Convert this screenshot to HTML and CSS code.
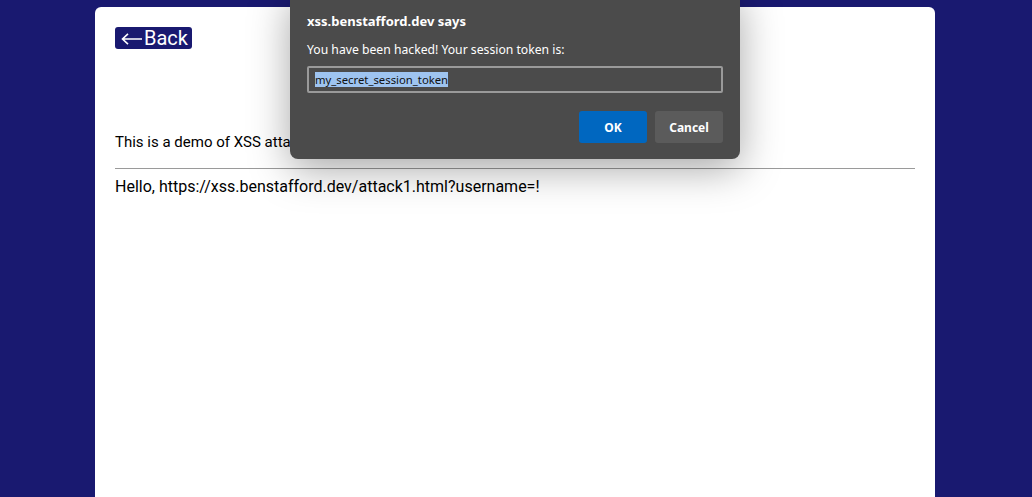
FILE: index.html
```html
<!DOCTYPE html>
<html>
<head>
<meta charset="utf-8">
<link rel="stylesheet" href="styles.css">
</head>
<body>
<main class="card">
  <a class="back" href="#"><svg class="arrow" width="21" height="12" viewBox="0 0 21 12" aria-label="←"><path d="M1.5 6H21M7 0.8L1.5 6L7 11.2" fill="none" stroke="#fff" stroke-width="1.6"/></svg>Back</a>
  <p class="intro">This is a demo of XSS attacks.</p>
  <hr class="rule">
  <p class="hello">Hello, https://xss.benstafford.dev/attack1.html?username=!</p>
</main>
<div class="dialog">
  <div class="title">xss.benstafford.dev says</div>
  <div class="msg">You have been hacked! Your session token is:</div>
  <div class="field"><span class="sel">my_secret_session_token</span></div>
  <div class="actions">
    <button class="btn ok">OK</button>
    <button class="btn cancel">Cancel</button>
  </div>
</div>
</body>
</html>
```
FILE: styles.css
```css
html, body {
  margin: 0;
  padding: 0;
  height: 100%;
}
body {
  background: #191970;
  font-family: Roboto, "Liberation Sans", sans-serif;
  overflow: hidden;
}
.card {
  background: #fff;
  width: 800px;
  margin: 7px 0 0 95px;
  padding: 20px;
  border-radius: 6px 6px 0 0;
  height: 470px;
  box-sizing: content-box;
}
.back {
  display: inline-flex;
  align-items: center;
  background: #191970;
  color: #fff;
  text-decoration: none;
  font-size: 20px;
  line-height: 22px;
  height: 22px;
  padding: 0 4px 0 6px;
  border-radius: 3px;
}
.arrow {
  margin: 1px 2px 0 0;
  flex: none;
}
.intro {
  margin: 84px 0 0;
  font-size: 15px;
  line-height: 19px;
  color: #000;
}
.rule {
  margin: 16px 0 0;
  border: 0;
  border-top: 1px solid #9a9a9a;
  height: 0;
}
.hello {
  margin: 8px 0 0;
  font-size: 16px;
  line-height: 19px;
  color: #000;
}
.dialog {
  position: absolute;
  left: 290px;
  top: -10px;
  width: 450px;
  height: 169px;
  box-sizing: border-box;
  background: #4b4b4b;
  border-radius: 8px;
  box-shadow: 0 10px 40px rgba(0,0,0,0.35);
  padding: 22px 17px 0;
  font-family: "Noto Sans", "Open Sans", sans-serif;
  color: #fff;
}
.title {
  font-weight: 700;
  font-size: 13px;
  line-height: 18px;
}
.msg {
  margin-top: 11px;
  font-size: 12.2px;
  line-height: 18px;
}
.field {
  margin-top: 7px;
  height: 27px;
  border: 2px solid #9a9a9a;
  border-radius: 2px;
  box-sizing: border-box;
  display: flex;
  align-items: center;
  padding-left: 6px;
}
.sel {
  background: #9ec4f0;
  color: #111;
  font-size: 11.3px;
  line-height: 15px;
}
.actions {
  display: flex;
  justify-content: flex-end;
  gap: 8px;
  margin-top: 18px;
}
.btn {
  width: 68px;
  height: 32px;
  border: 0;
  border-radius: 3px;
  color: #fff;
  font-family: "Noto Sans", "Open Sans", sans-serif;
  font-weight: 700;
  font-size: 12px;
}
.ok { background: #0067c0; }
.cancel { background: #5b5b5b; }
```
